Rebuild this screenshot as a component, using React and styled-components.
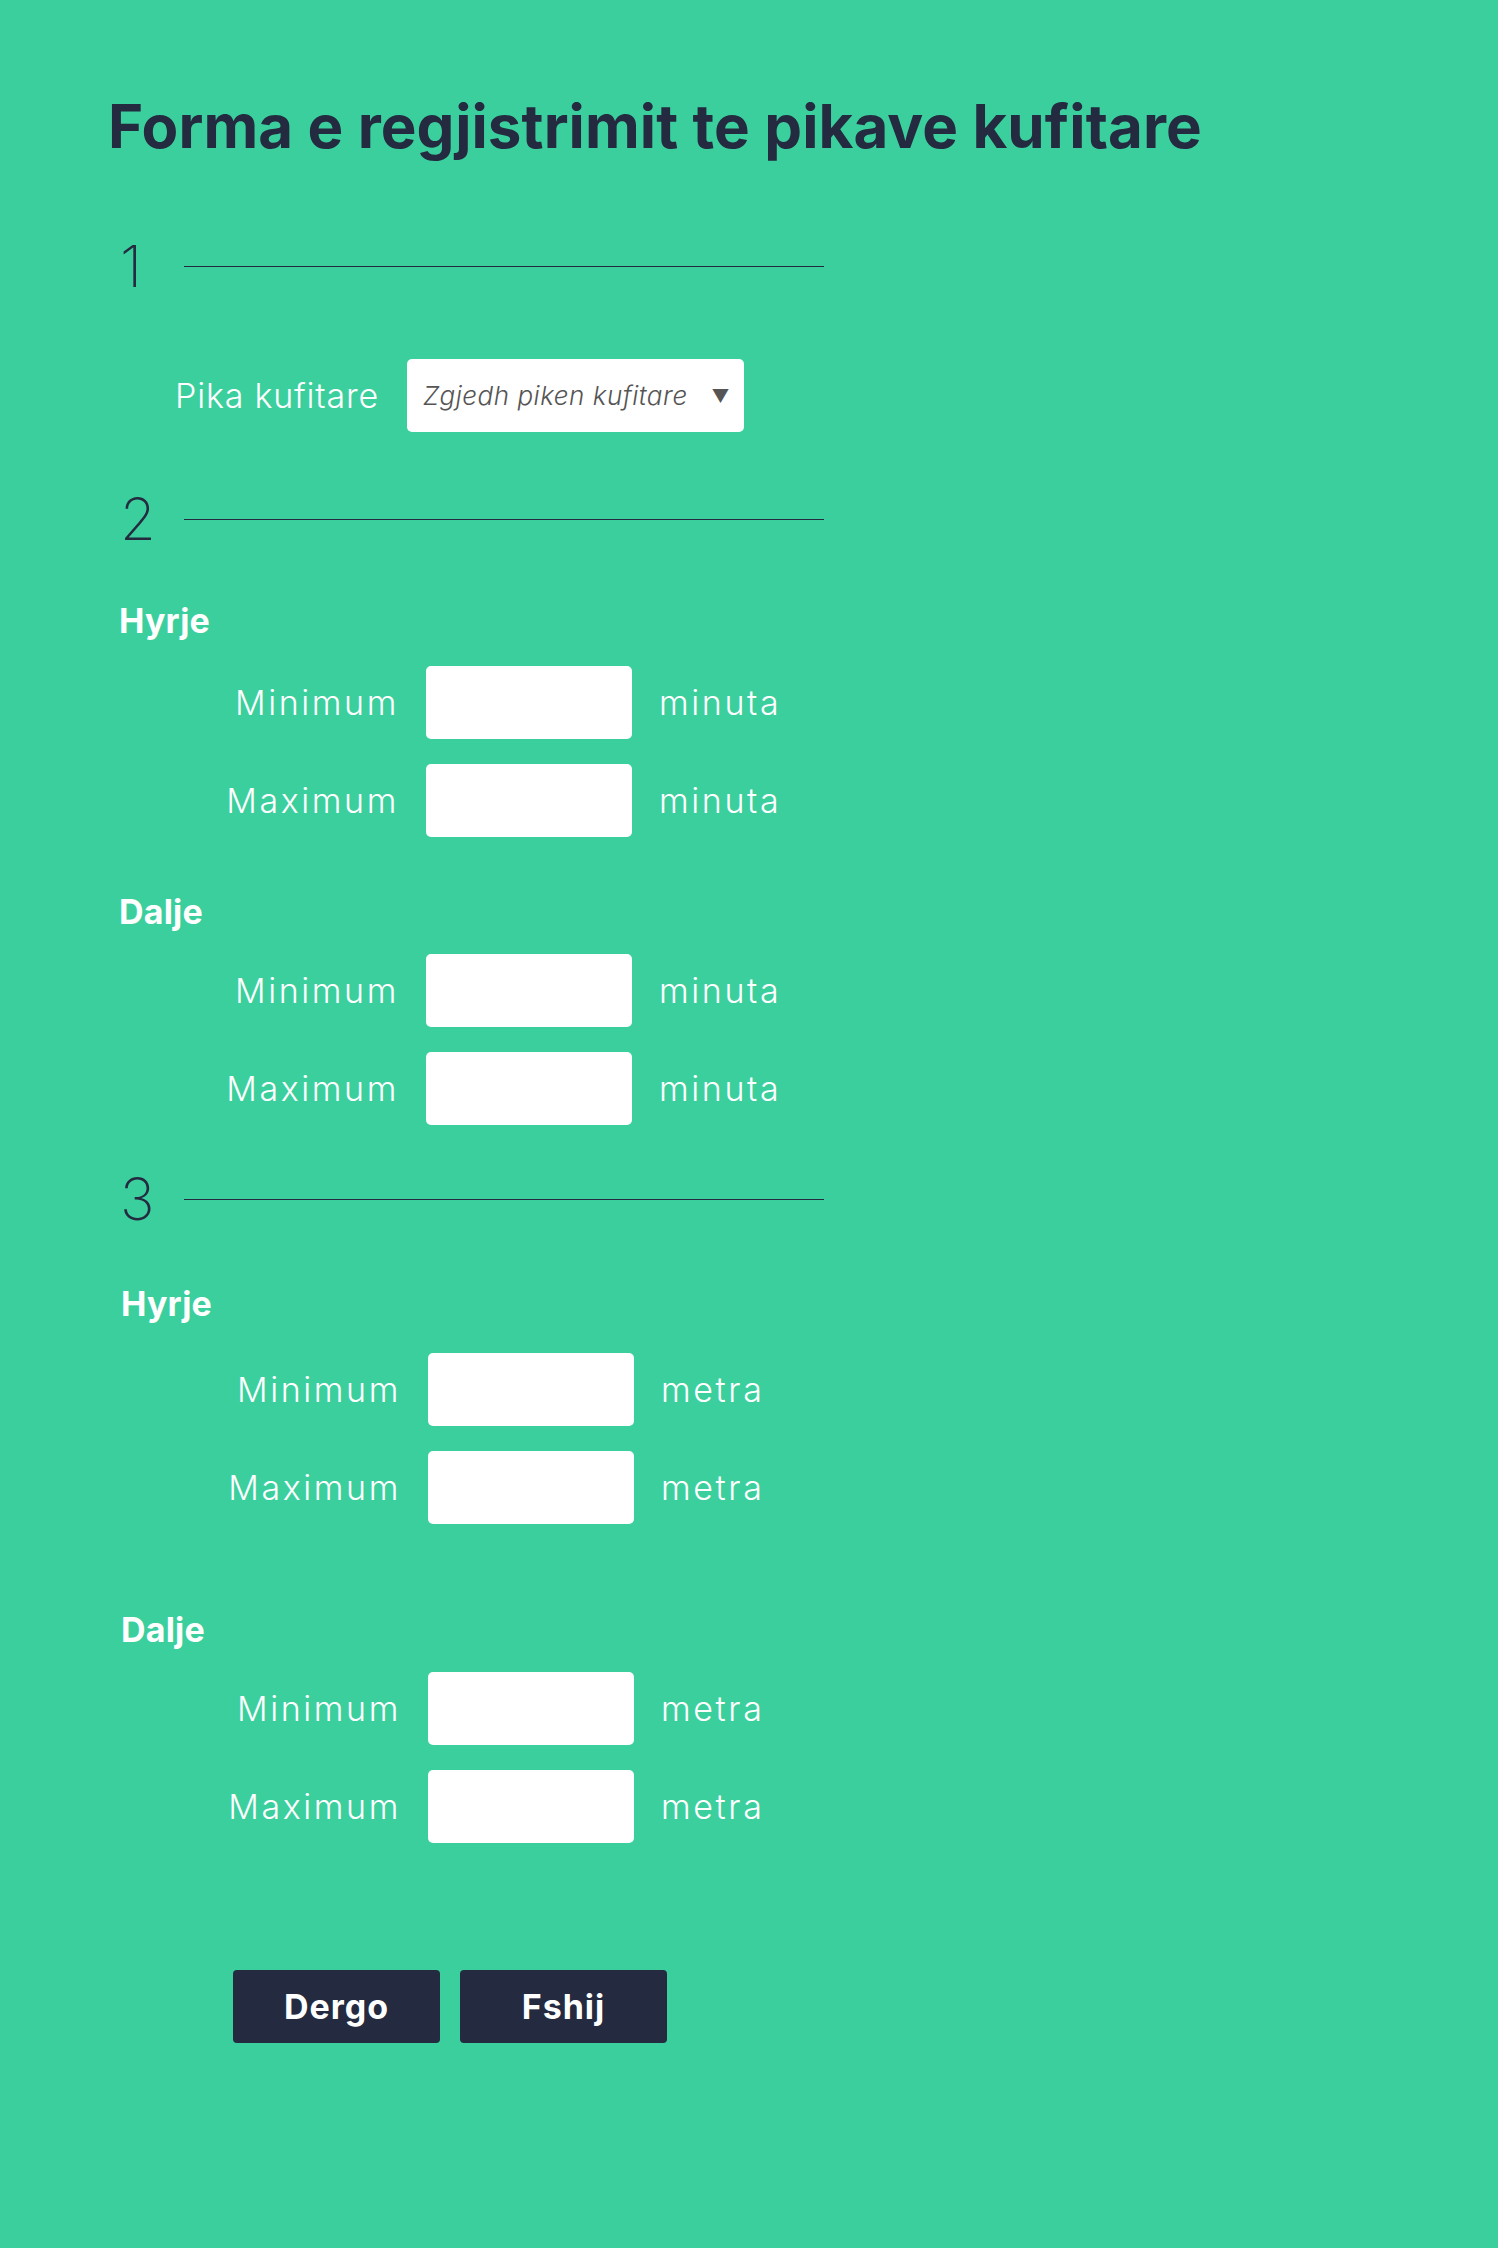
import React from "react";
import styled, { createGlobalStyle } from "styled-components";

const GlobalStyle = createGlobalStyle`
  html, body {
    margin: 0;
    padding: 0;
    background: #3bcf9e;
    min-height: 100%;
  }
  body {
    font-family: "Inter", "Noto Sans", sans-serif;
    color: #242a3f;
  }
`;

const Page = styled.div`
  min-height: 2248px;
  padding: 90px 0 0 108px;
  box-sizing: border-box;
  background: #3bcf9e;
`;

const Title = styled.h1`
  margin: 0;
  font-size: 60px;
  line-height: 72px;
  font-weight: 700;
  color: #242a3f;
  letter-spacing: 0.1px;
`;

const SectionHeader = styled.div`
  display: flex;
  align-items: center;
  height: 60px;
  margin-top: ${({ $top }) => $top}px;
`;

const StepNumber = styled.span`
  width: 76px;
  padding-left: 12px;
  box-sizing: border-box;
  font-size: 58px;
  line-height: 60px;
  font-weight: 200;
  color: #242a3f;
`;

const Rule = styled.div`
  width: 640px;
  height: 1px;
  background: #242a3f;
`;

const SelectRow = styled.div`
  display: flex;
  align-items: center;
  gap: 28px;
  margin-top: 63px;
  padding-left: 67px;
`;

const Label = styled.label`
  font-size: 34px;
  font-weight: 300;
  color: #ffffff;
  letter-spacing: 0.8px;
`;

const Select = styled.div`
  position: relative;
  width: 337px;
  height: 73px;
  background: #ffffff;
  border-radius: 5px;
  display: flex;
  align-items: center;
  padding-left: 16px;
  box-sizing: border-box;
  font-size: 26px;
  font-style: italic;
  font-weight: 300;
  letter-spacing: 0.5px;
  color: #555555;
`;

const Arrow = styled.span`
  position: absolute;
  right: 14px;
  top: 50%;
  transform: translateY(-50%);
  font-size: 18px;
  font-style: normal;
  color: #555555;
`;

const Group = styled.div`
  margin-left: ${({ $shift }) => $shift || 0}px;
`;

const GroupTitle = styled.div`
  margin-top: ${({ $top }) => $top}px;
  padding-left: 11px;
  font-size: 34px;
  line-height: 40px;
  font-weight: 700;
  color: #ffffff;
  letter-spacing: 0.2px;
`;

const Rows = styled.div`
  display: flex;
  flex-direction: column;
  gap: 25px;
  margin-top: ${({ $top }) => $top || 22}px;
`;

const Row = styled.div`
  display: flex;
  align-items: center;
  gap: 27px;
`;

const RowLabel = styled(Label)`
  width: 291px;
  text-align: right;
  letter-spacing: 2.6px;
`;

const Field = styled.input`
  width: 206px;
  height: 73px;
  border: none;
  border-radius: 5px;
  background: #ffffff;
  box-sizing: border-box;
  padding: 0 12px;
  font-size: 24px;
  font-family: inherit;
  outline: none;
`;

const Unit = styled.span`
  font-size: 34px;
  font-weight: 300;
  color: #ffffff;
  letter-spacing: 2.6px;
`;

const Buttons = styled.div`
  display: flex;
  gap: 20px;
  margin-top: 127px;
  padding-left: 125px;
`;

const Button = styled.button`
  width: 207px;
  height: 73px;
  border: none;
  border-radius: 4px;
  background: #242a3f;
  color: #ffffff;
  font-family: inherit;
  font-size: 34px;
  font-weight: 700;
  letter-spacing: 1px;
  cursor: pointer;
`;

const Limits = ({ unit, top }) => (
  <Rows $top={top}>
    <Row>
      <RowLabel>Minimum</RowLabel>
      <Field />
      <Unit>{unit}</Unit>
    </Row>
    <Row>
      <RowLabel>Maximum</RowLabel>
      <Field />
      <Unit>{unit}</Unit>
    </Row>
  </Rows>
);

export default function App() {
  return (
    <>
      <GlobalStyle />
      <Page>
        <Title>Forma e regjistrimit te pikave kufitare</Title>

        <SectionHeader $top={74}>
          <StepNumber>1</StepNumber>
          <Rule />
        </SectionHeader>
        <SelectRow>
          <Label>Pika kufitare</Label>
          <Select>
            Zgjedh piken kufitare
            <Arrow>▼</Arrow>
          </Select>
        </SelectRow>

        <SectionHeader $top={57}>
          <StepNumber>2</StepNumber>
          <Rule />
        </SectionHeader>
        <Group>
          <GroupTitle $top={52}>Hyrje</GroupTitle>
          <Limits unit="minuta" top={25} />
          <GroupTitle $top={55}>Dalje</GroupTitle>
          <Limits unit="minuta" />
        </Group>

        <SectionHeader $top={44}>
          <StepNumber>3</StepNumber>
          <Rule />
        </SectionHeader>
        <Group $shift={2}>
          <GroupTitle $top={55}>Hyrje</GroupTitle>
          <Limits unit="metra" top={29} />
          <GroupTitle $top={86}>Dalje</GroupTitle>
          <Limits unit="metra" />
        </Group>

        <Buttons>
          <Button>Dergo</Button>
          <Button>Fshij</Button>
        </Buttons>
      </Page>
    </>
  );
}
